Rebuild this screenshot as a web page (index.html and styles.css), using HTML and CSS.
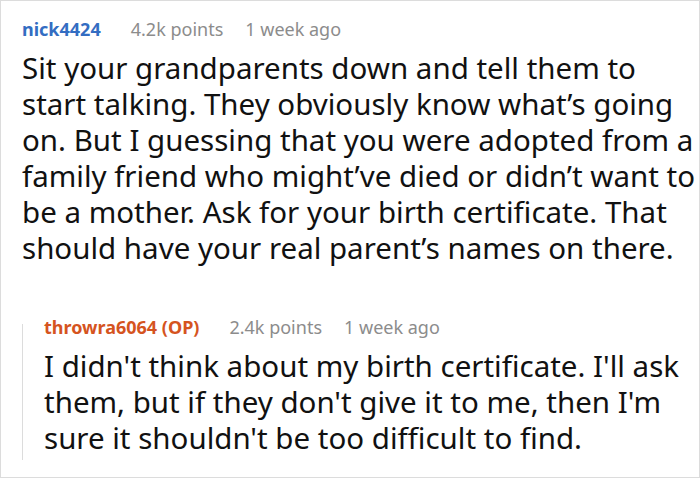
FILE: index.html
```html
<!DOCTYPE html>
<html>
<head>
<meta charset="utf-8">
<link rel="stylesheet" href="styles.css">
</head>
<body>
<div class="frame">
  <div class="comment">
    <div class="meta">
      <span class="user">nick4424</span>
      <span class="info points">4.2k points</span>
      <span class="info">1 week ago</span>
    </div>
    <p class="body">Sit your grandparents down and tell them to start talking. They obviously know what’s going on. But I guessing that you were adopted from a family friend who might’ve died or didn’t want to be a mother. Ask for your birth certificate. That should have your real parent’s names on there.</p>
    <div class="reply">
      <div class="rail"></div>
      <div class="reply-content">
        <div class="meta">
          <span class="user op">throwra6064 (OP)</span>
          <span class="info points">2.4k points</span>
          <span class="info">1 week ago</span>
        </div>
        <p class="body">I didn't think about my birth certificate. I'll ask them, but if they don't give it to me, then I'm sure it shouldn't be too difficult to find.</p>
      </div>
    </div>
  </div>
</div>
</body>
</html>
```

FILE: styles.css
```css
html, body {
  margin: 0;
  padding: 0;
  background: #fff;
}
.frame {
  width: 700px;
  height: 478px;
  box-sizing: border-box;
  border: 1px solid #dcdcdc;
  font-family: "Noto Sans", "Open Sans", sans-serif;
  color: #111;
  overflow: hidden;
}
.comment {
  padding: 16px 0 0 21px;
}
.meta {
  display: flex;
  font-size: 18px;
  line-height: 24px;
  align-items: baseline;
  white-space: nowrap;
}
.user {
  font-weight: 700;
  color: #336dc2;
}
.user.op {
  color: #d5541f;
}
.info {
  color: #8c8c8c;
}
.points {
  margin-left: 30px;
  margin-right: 22px;
}
.body {
  margin: 9px 0 0;
  font-size: 29.5px;
  line-height: 36px;
  color: #111;
}
.reply {
  display: flex;
  margin-top: 49px;
}
.rail {
  width: 1px;
  flex: none;
  background: #dcdcdc;
  margin: 9px 21px -4px 0;
}
```
